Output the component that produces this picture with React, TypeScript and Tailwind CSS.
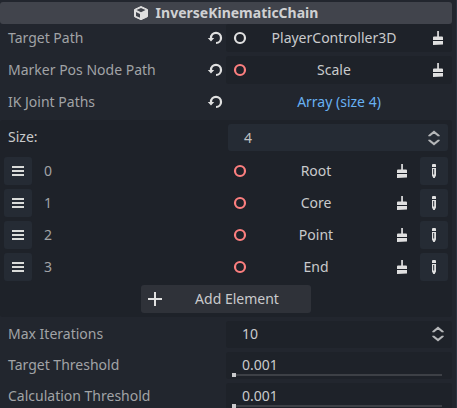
import type { ReactNode } from "react";

const RED = "#fc7f7f";
const LIGHT = "#e0e0e0";

function NodeIcon({ color }: { color: string }) {
  return (
    <svg className="h-4 w-4 shrink-0" viewBox="0 0 16 16" fill="none">
      <circle cx="8" cy="8" r="5" stroke={color} strokeWidth="2.200" />
    </svg>
  );
}

function RevertIcon() {
  return (
    <svg className="h-4 w-4 shrink-0" viewBox="0 0 16 16" fill={LIGHT}>
      <path d="M9 1.800A6.100 6.100 0 0 0 2.900 8H.800L4 11.400 7.200 8H5.100A3.900 3.900 0 1 1 9 11.900v2.200A6.150 6.150 0 0 0 9 1.800z" />
    </svg>
  );
}

function ClearIcon() {
  return (
    <svg className="h-4 w-4 shrink-0" viewBox="0 0 16 16" fill={LIGHT}>
      <path d="M7.200 1h1.700v5.500H12a1 1 0 0 1 1 1V10H3V7.500a1 1 0 0 1 1-1h3.200z" />
      <path d="M3 11h10v3.500L3 15z" />
    </svg>
  );
}

function PencilIcon() {
  return (
    <svg className="h-4 w-4 shrink-0" viewBox="0 0 16 16" fill={LIGHT}>
      <path d="M7 1a1 1 0 0 0-1 1v2h4V2a1 1 0 0 0-1-1zM6 5v7.500L7.300 15h1.400l1.300-2.500V5zm1.200 1h1v5.500h-1z" fillRule="evenodd" />
    </svg>
  );
}

function UpDownIcon() {
  return (
    <svg className="h-4 w-4 shrink-0" viewBox="0 0 16 16" fill="none" stroke="#b5b7b9" strokeWidth="2">
      <path d="M3.300 6.200V5.800L8 1.900l4.700 3.900v.400M3.300 9.800v.400L8 14.100l4.700-3.900v-.400" />
    </svg>
  );
}

function CubeIcon() {
  return (
    <svg className="h-4 w-4 shrink-0" viewBox="0 0 16 16">
      <path d="M8 1.500 14.500 4.500v7.200L8 14.700 1.500 11.700V4.500z" fill={LIGHT} stroke={LIGHT} strokeLinejoin="round" />
      <path d="M8 3.100 12.500 5.100 8 7.200 3.500 5.100z" fill="#41444c" />
      <path d="M3 7 7 8.900v3.900L3 11z" fill="#41444c" />
    </svg>
  );
}

function Property({ label, revert, children }: { label: string; revert?: boolean; children: ReactNode }) {
  return (
    <div className="flex">
      <div className="flex w-[226px] items-center justify-between pl-2 pr-[3px] text-[#a1a3a6]">
        <span className={revert ? "" : "pb-0.5"}>{label}</span>
        {revert && <RevertIcon />}
      </div>
      {children}
    </div>
  );
}

function NodeValue({ name, color }: { name: string; color: string }) {
  return (
    <div className="flex h-7 w-[226px] items-center rounded-[3px] bg-[#1e2229] px-1.5 text-[#c9cacc]">
      <NodeIcon color={color} />
      <span className="flex-1 pr-2.5 text-center">{name}</span>
      <ClearIcon />
    </div>
  );
}

function SliderValue({ value }: { value: string }) {
  return (
    <div className="flex h-[27px] w-[226px] flex-col rounded-[3px] bg-[#1e2229] text-[#c9cacc]">
      <span className="h-[21px] pl-4 leading-[26px]">{value}</span>
      <div className="ml-1.5 mr-2.5 flex h-1 items-center">
        <div className="h-1 w-1 bg-[#c9cacc]" />
        <div className="h-0.5 flex-1 bg-[#3d4046]" />
      </div>
    </div>
  );
}

function ArrayItem({ index, name }: { index: number; name: string }) {
  return (
    <div className="flex h-7 items-center">
      <div className="flex h-7 w-7 flex-col items-center justify-center gap-0.5 rounded-[3px] bg-[#252b34]">
        <div className="h-0.5 w-3 bg-[#dadcda]" />
        <div className="h-0.5 w-3 bg-[#dadcda]" />
        <div className="h-0.5 w-3 bg-[#dadcda]" />
      </div>
      <span className="w-[200px] pl-3 text-[#a1a3a6]">{index}</span>
      <NodeIcon color={RED} />
      <span className="flex-1 pr-2.5 text-center text-[#c9cacc]">{name}</span>
      <ClearIcon />
      <div className="ml-2.5 flex h-7 w-7 items-center justify-center rounded-[3px] bg-[#252b34]">
        <PencilIcon />
      </div>
    </div>
  );
}

const joints = ["Root", "Core", "Point", "End"];

export default function App() {
  return (
    <div className="flex h-[408px] w-[457px] overflow-hidden bg-[#22262e] font-['Noto_Sans',sans-serif] text-[14px] leading-5">
      <div className="w-[456px] shrink-0 pt-0.5">
        <div className="flex h-[22px] w-[452px] items-center justify-center gap-[7px] rounded-[3px] bg-[#41444c] pr-px font-bold text-[#d0d1d3]">
          <CubeIcon />
          <span>InverseKinematicChain</span>
        </div>
        <div className="flex flex-col gap-1">
          <Property label="Target Path" revert>
            <NodeValue name="PlayerController3D" color={LIGHT} />
          </Property>
          <Property label="Marker Pos Node Path" revert>
            <NodeValue name="Scale" color={RED} />
          </Property>
          <Property label="IK Joint Paths" revert>
            <div className="flex h-7 w-[226px] items-center justify-center text-[#68b1f3]">Array (size 4)</div>
          </Property>
          <div className="h-[197px] w-[452px] rounded-[3px] bg-[#1e2229] px-1 pt-1">
            <div className="flex h-[27px] items-center">
              <span className="w-[224px] pb-0.5 pl-1 text-[#c9cacc]">Size:</span>
              <div className="flex h-[27px] flex-1 items-center justify-between rounded-[3px] bg-[#252b34] pl-4 pr-1.5 text-[#c0c2c4]">
                <span>4</span>
                <UpDownIcon />
              </div>
            </div>
            <div className="mt-1.5 flex flex-col gap-1">
              {joints.map((name, index) => (
                <ArrayItem key={name} index={index} name={name} />
              ))}
              <div className="mx-auto flex h-7 w-[170px] items-center rounded-[3px] bg-[#2f3239] px-1.5 text-[#c9cacc]">
                <svg className="h-4 w-4 shrink-0" viewBox="0 0 16 16" fill={LIGHT}>
                  <path d="M7 1h2v6h6v2H9v6H7V9H1V7h6z" />
                </svg>
                <span className="flex-1 pl-1.5 text-center">Add Element</span>
              </div>
            </div>
          </div>
          <Property label="Max Iterations">
            <div className="flex h-[27px] w-[226px] items-center justify-between rounded-[3px] bg-[#1e2229] pb-px pl-4 pr-1.5 text-[#c9cacc]">
              <span>10</span>
              <UpDownIcon />
            </div>
          </Property>
          <Property label="Target Threshold">
            <SliderValue value="0.001" />
          </Property>
          <Property label="Calculation Threshold">
            <SliderValue value="0.001" />
          </Property>
        </div>
      </div>
      <div className="w-px bg-[#2b3340]" />
    </div>
  );
}
